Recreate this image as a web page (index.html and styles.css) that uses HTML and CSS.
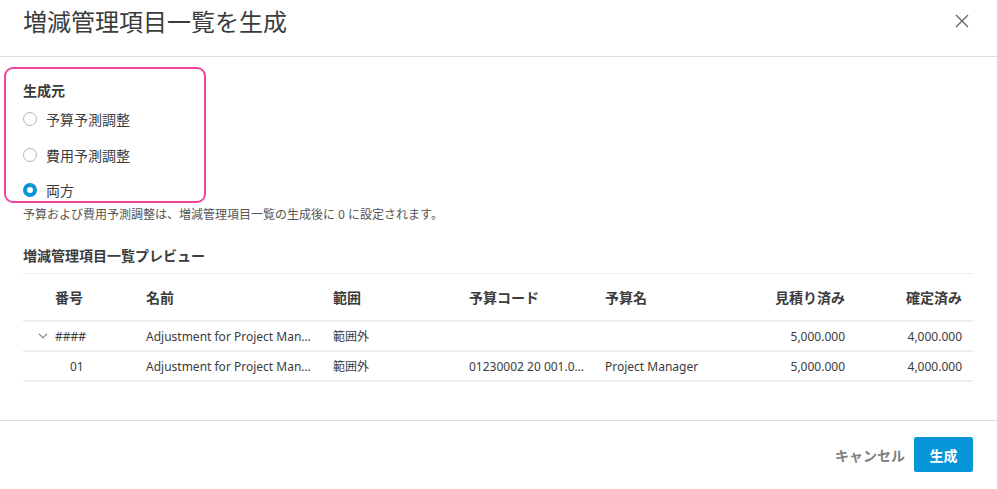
FILE: index.html
```html
<!DOCTYPE html>
<html lang="ja">
<head>
  <meta charset="UTF-8">
  <meta name="viewport" content="width=device-width, initial-scale=1.0">
  <title>増減管理項目一覧を生成</title>
  <link rel="stylesheet" href="styles.css">
</head>
<body>
  <div class="dialog">
    <header class="dialog-header">
      <h1>増減管理項目一覧を生成</h1>
      <button class="close-button" aria-label="閉じる">
        <svg width="14" height="14" viewBox="0 0 14 14"><path d="M1 1L13 13M13 1L1 13" stroke="#666" stroke-width="1.4" fill="none"/></svg>
      </button>
    </header>

    <main class="dialog-body">
      <div class="source-box">
        <div class="source-label">生成元</div>
        <label class="radio-row"><span class="radio"></span>予算予測調整</label>
        <label class="radio-row"><span class="radio"></span>費用予測調整</label>
        <label class="radio-row"><span class="radio checked"></span>両方</label>
      </div>
      <p class="note">予算および費用予測調整は、増減管理項目一覧の生成後に 0 に設定されます。</p>

      <h2 class="preview-title">増減管理項目一覧プレビュー</h2>

      <div class="table">
        <div class="row head">
          <div class="cell num">番号</div>
          <div class="cell">名前</div>
          <div class="cell">範囲</div>
          <div class="cell">予算コード</div>
          <div class="cell">予算名</div>
          <div class="cell right">見積り済み</div>
          <div class="cell right last">確定済み</div>
        </div>
        <div class="row">
          <div class="cell num parent">
            <svg class="chevron" width="10" height="6" viewBox="0 0 10 6"><path d="M1 0.8L5 4.8L9 0.8" stroke="#777" stroke-width="1.1" fill="none"/></svg>####
          </div>
          <div class="cell">Adjustment for Project Management</div>
          <div class="cell">範囲外</div>
          <div class="cell"></div>
          <div class="cell"></div>
          <div class="cell right">5,000.000</div>
          <div class="cell right last">4,000.000</div>
        </div>
        <div class="row">
          <div class="cell num child">01</div>
          <div class="cell">Adjustment for Project Management</div>
          <div class="cell">範囲外</div>
          <div class="cell">01230002 20 001.000</div>
          <div class="cell">Project Manager</div>
          <div class="cell right">5,000.000</div>
          <div class="cell right last">4,000.000</div>
        </div>
      </div>
    </main>

    <footer class="dialog-footer">
      <button class="btn-cancel">キャンセル</button>
      <button class="btn-primary">生成</button>
    </footer>
  </div>
</body>
</html>
```

FILE: styles.css
```css
* {
  box-sizing: border-box;
}

body {
  margin: 0;
  font-family: "Noto Sans CJK JP", "Noto Sans", sans-serif;
  color: #3c3c3c;
  background-color: #fff;
}

.dialog {
  display: flex;
  flex-direction: column;
  height: 100vh;
}

.dialog-header {
  display: flex;
  align-items: center;
  justify-content: space-between;
  height: 57px;
  padding: 0 24px 14px 23px;
  border-bottom: 1px solid #dcdcdc;
}

.dialog-header h1 {
  margin: 0;
  font-size: 24px;
  font-weight: normal;
  line-height: 32px;
  color: #3c3c3c;
}

.close-button {
  background: none;
  border: none;
  padding: 0;
  margin-right: 4px;
  cursor: pointer;
  display: flex;
}

.dialog-body {
  flex: 1;
  padding: 10px 24px 0 23px;
}

/* 生成元 */
.source-box {
  width: 202px;
  margin-left: -19px;
  padding: 12px 17px 1px;
  border: 2px solid #f2449c;
  border-radius: 9px;
}

.source-label {
  font-size: 14px;
  font-weight: bold;
  line-height: 18px;
}

.radio-row {
  display: flex;
  align-items: center;
  height: 20px;
  margin-top: 16px;
  font-size: 14px;
  cursor: pointer;
}

.source-label + .radio-row {
  margin-top: 10px;
}

.radio-row:last-child {
  margin-top: 15px;
}

.radio {
  width: 14px;
  height: 14px;
  margin-right: 9px;
  border: 1px solid #b4b4b4;
  border-radius: 50%;
  background: #fff;
}

.radio.checked {
  border: 4px solid #0696d7;
}

.note {
  margin: 4px 0 0;
  font-family: "Noto Sans", "Noto Sans CJK JP", sans-serif;
  font-size: 12px;
  line-height: 16px;
  color: #555;
}

.preview-title {
  margin: 23px 0 9px;
  font-size: 14px;
  font-weight: bold;
  line-height: 18px;
}

/* プレビュー表 */
.table {
  border-top: 1px solid #eeeeee;
}

.row {
  display: grid;
  grid-template-columns: 113px 187px 136px 136px 136px 124px 118px;
  align-items: center;
  height: 30px;
  border-bottom: 2px solid #eeeeee;
  font-family: "Noto Sans", "Noto Sans CJK JP", sans-serif;
  font-size: 12px;
  color: #3c3c3c;
}

.row.head {
  height: 48px;
  font-family: "Noto Sans CJK JP", sans-serif;
  font-size: 14px;
  font-weight: bold;
  padding-bottom: 1px;
}

.cell {
  padding: 0 10px;
  white-space: nowrap;
  overflow: hidden;
  text-overflow: ellipsis;
}

.cell.right {
  text-align: right;
}

.cell.last {
  padding-right: 11px;
}

.cell.num {
  padding-left: 32px;
}

.cell.parent {
  display: flex;
  align-items: center;
  padding-left: 15px;
}

.chevron {
  margin-right: 7px;
}

.cell.child {
  padding-left: 47px;
}

.dialog-footer {
  display: flex;
  justify-content: flex-end;
  align-items: flex-start;
  height: 69px;
  padding: 16px 24px 0;
  border-top: 1px solid #dcdcdc;
}

.btn-cancel {
  height: 35px;
  padding: 0 8px;
  margin-right: 1px;
  border: none;
  background: none;
  font-family: inherit;
  font-size: 14px;
  font-weight: bold;
  color: #808080;
  cursor: pointer;
}

.btn-primary {
  width: 59px;
  height: 35px;
  border: none;
  border-radius: 2px;
  background-color: #0696d7;
  color: #fff;
  font-family: inherit;
  font-size: 14px;
  font-weight: bold;
  cursor: pointer;
}

.btn-primary:hover {
  background-color: #0580b8;
}
```
